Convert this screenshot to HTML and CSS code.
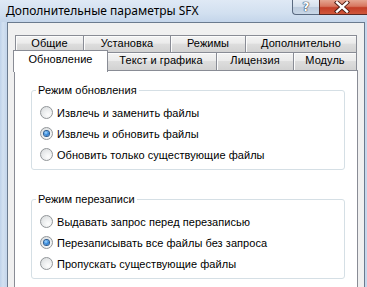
FILE: index.html
```html
<!DOCTYPE html>
<html lang="ru">
<head>
<meta charset="utf-8">
<title>Дополнительные параметры SFX</title>
<link rel="stylesheet" href="styles.css">
</head>
<body>
<div class="frame">
  <div class="titlebar">
    <span class="title">Дополнительные параметры SFX</span>
    <div class="caption">
      <div class="cbtn help"><span class="q">?</span></div>
      <div class="cbtn close">
        <svg width="16" height="12" viewBox="0 0 16 12">
          <path d="M3 1.5 L13 10.5 M13 1.5 L3 10.5" stroke="#4a1a12" stroke-width="4.2" stroke-linecap="square"/>
          <path d="M3 1.5 L13 10.5 M13 1.5 L3 10.5" stroke="#ffffff" stroke-width="2.4" stroke-linecap="square"/>
        </svg>
      </div>
    </div>
  </div>
  <div class="client">
    <div class="tabs">
      <div class="tabrow row1">
        <div class="tab w1">Общие</div>
        <div class="tab w2">Установка</div>
        <div class="tab w3">Режимы</div>
        <div class="tab w4">Дополнительно</div>
      </div>
      <div class="tabrow row2">
        <div class="tab sel">Обновление</div>
        <div class="tab w6">Текст и графика</div>
        <div class="tab w7">Лицензия</div>
        <div class="tab w8">Модуль</div>
      </div>
      <div class="panel">
        <fieldset class="group">
          <legend>Режим обновления</legend>
          <div class="opt"><span class="radio"></span><span>Извлечь и заменить файлы</span></div>
          <div class="opt"><span class="radio on"></span><span>Извлечь и обновить файлы</span></div>
          <div class="opt"><span class="radio"></span><span>Обновить только существующие файлы</span></div>
        </fieldset>
        <fieldset class="group second">
          <legend>Режим перезаписи</legend>
          <div class="opt"><span class="radio"></span><span>Выдавать запрос перед перезаписью</span></div>
          <div class="opt"><span class="radio on"></span><span>Перезаписывать все файлы без запроса</span></div>
          <div class="opt"><span class="radio"></span><span>Пропускать существующие файлы</span></div>
        </fieldset>
      </div>
    </div>
  </div>
</div>
</body>
</html>
```

FILE: styles.css
```css
html, body {
  margin: 0;
  padding: 0;
}
body {
  width: 367px;
  height: 287px;
  overflow: hidden;
  font-family: "Liberation Sans", Arial, sans-serif;
  font-size: 11px;
  letter-spacing: 0.05px;
  color: #000;
}
.frame {
  height: 287px;
  display: flex;
  flex-direction: column;
  background: linear-gradient(90deg, #bfd2ea 0px, #d3e1f1 3px, #c6d7ec 6px);
}
.titlebar {
  height: 22px;
  flex: none;
  display: flex;
  align-items: flex-start;
  background: linear-gradient(180deg, #dfe9f5 0%, #d2e0f0 60%, #c4d5ea 100%);
}
.title {
  padding-left: 6px;
  line-height: 21px;
  font-family: "Noto Sans", sans-serif;
  font-size: 12px;
  letter-spacing: 0;
  color: #000;
}
.caption {
  margin-left: auto;
  display: flex;
}
.cbtn {
  box-sizing: border-box;
  height: 15px;
  display: flex;
  align-items: center;
  justify-content: center;
  border: 1px solid #5a6a80;
  border-top: none;
}
.help {
  width: 27px;
  border-right: none;
  border-radius: 0 0 0 4px;
  background: linear-gradient(180deg, #e6edf5 0%, #d3dfec 50%, #bccbdd 51%, #c9d7e7 100%);
}
.q {
  font-family: "DejaVu Sans", sans-serif;
  font-weight: bold;
  font-size: 12px;
  line-height: 12px;
  letter-spacing: 0;
  color: #fff;
  text-shadow: 0 0 1px #2a3850, 0 0 1px #2a3850, 0 0 1px #2a3850;
}
.close {
  width: 48px;
  border-right: none;
  background: linear-gradient(180deg, #e5a591 0%, #d7765f 45%, #c33d26 55%, #d0583c 100%);
  border-color: #5b2a24;
  justify-content: flex-start;
  padding-left: 14px;
}
.client {
  flex: 1;
  min-height: 0;
  display: flex;
  flex-direction: column;
  margin: 0 2px 0 7px;
  border: 1px solid #6a7a8e;
  border-bottom: none;
  background: #f0f0f0;
  padding: 12px 0 0 6px;
}
.tabs {
  flex: 1;
  min-height: 0;
  width: 344px;
  display: flex;
  flex-direction: column;
}
.tabrow {
  display: flex;
  align-items: flex-start;
  padding-left: 1px;
}
.tab {
  box-sizing: border-box;
  border: 1px solid #898c95;
  border-bottom: none;
  margin-left: -1px;
  padding-top: 1px;
  line-height: 13px;
  text-align: center;
  white-space: nowrap;
  background: linear-gradient(180deg, #f3f3f3 0%, #ebebeb 45%, #dddddd 50%, #d2d2d2 100%);
  box-shadow: inset 1px 1px 0 #fcfcfc;
}
.tab:first-child {
  margin-left: 0;
}
.row1 .tab { height: 17px; }
.row2 .tab { height: 18px; }
.w1 { width: 69px; }
.w2 { width: 88px; }
.w3 { width: 76px; }
.w4 { width: 112px; }
.w6 { width: 112px; }
.w7 { width: 78px; }
.w8 { width: 64px; }
.row2 .tab.sel {
  width: 95px;
  height: 22px;
  margin: -2px -2px -2px -2px;
  padding-top: 2px;
  background: #fff;
  box-shadow: none;
  position: relative;
  z-index: 1;
}
.panel {
  flex: 1;
  min-height: 0;
  overflow: hidden;
  border: 1px solid #898c95;
  border-bottom: none;
  background: #fff;
  padding: 0 12px 0 16px;
}
.group {
  margin: 13px 0 0 0;
  padding: 5px 0 4px 0;
  border: 1px solid #d5dfe5;
  border-radius: 3px;
  min-width: 0;
}
.group.second {
  margin-top: 23px;
}
legend {
  margin-left: 4px;
  padding: 0 2px;
  line-height: 13px;
  font-size: 11px;
}
.opt {
  height: 21px;
  display: flex;
  align-items: center;
  gap: 4px;
  padding-left: 8px;
  white-space: nowrap;
}
.radio {
  box-sizing: border-box;
  width: 13px;
  height: 13px;
  flex: none;
  border-radius: 50%;
  border: 1px solid #929699;
  background: radial-gradient(circle at 65% 70%, #fdfdfd 0%, #eceeef 45%, #d4d7d9 100%);
  display: flex;
  align-items: center;
  justify-content: center;
}
.radio.on::after {
  content: "";
  width: 5px;
  height: 5px;
  border-radius: 50%;
  background: radial-gradient(circle at 40% 35%, #a9dcff 0%, #3d8fe0 45%, #135aa8 100%);
  box-shadow: 0 0 0 1px #2a5b90;
}
```
